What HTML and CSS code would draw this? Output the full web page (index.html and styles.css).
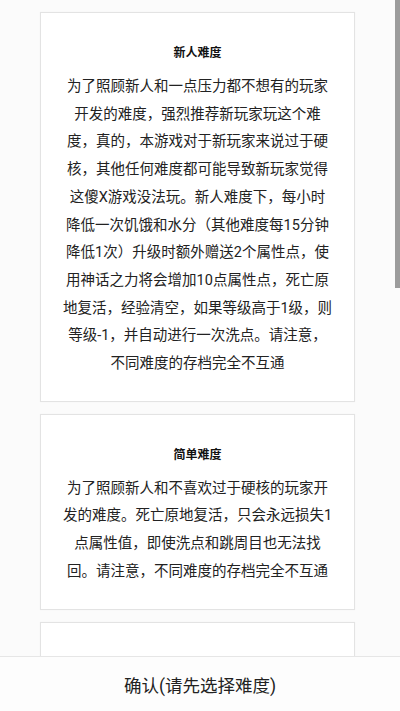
FILE: index.html
```html
<!DOCTYPE html>
<html lang="zh-CN">
<head>
<meta charset="utf-8">
<title>选择难度</title>
<link rel="stylesheet" href="styles.css">
</head>
<body>
<div class="app">
  <div class="list">
    <div class="cards">
      <div class="card">
        <div class="card-title">新人难度</div>
        <div class="card-text">为了照顾新人和一点压力都不想有的玩家开发的难度，强烈推荐新玩家玩这个难度，真的，本游戏对于新玩家来说过于硬核，其他任何难度都可能导致新玩家觉得这傻X游戏没法玩。新人难度下，每小时降低一次饥饿和水分（其他难度每15分钟降低1次）升级时额外赠送2个属性点，使用神话之力将会增加10点属性点，死亡原地复活，经验清空，如果等级高于1级，则等级-1，并自动进行一次洗点。请注意，不同难度的存档完全不互通</div>
      </div>
      <div class="card">
        <div class="card-title">简单难度</div>
        <div class="card-text">为了照顾新人和不喜欢过于硬核的玩家开发的难度。死亡原地复活，只会永远损失1点属性值，即使洗点和跳周目也无法找回。请注意，不同难度的存档完全不互通</div>
      </div>
      <div class="card card-empty"></div>
    </div>
    <div class="scroll-thumb"></div>
  </div>
  <div class="bottom-bar">确认(请先选择难度)</div>
</div>
</body>
</html>
```
FILE: styles.css
```css
html, body {
  margin: 0;
  padding: 0;
}
body {
  font-family: Roboto, "Noto Sans CJK SC", sans-serif;
  background: #fbfbfb;
  color: #222;
}
.app {
  height: 711px;
  display: flex;
  flex-direction: column;
}
.list {
  flex: 1;
  min-height: 0;
  overflow: hidden;
  position: relative;
}
.cards {
  width: 395px;
  padding-top: 12px;
  display: flex;
  flex-direction: column;
  align-items: center;
  gap: 12px;
}
.card {
  width: 313px;
  background: #fff;
  border: 1px solid #e3e3e3;
  box-shadow: 0 0 1px rgba(0,0,0,0.06);
  padding: 32px 0 23px;
  text-align: center;
}
.card-empty {
  height: 200px;
}
.card-title {
  font-size: 12px;
  line-height: 16px;
  font-weight: 700;
  color: #111;
}
.card-text {
  margin: 12px auto 0;
  width: 269.6px;
  font-size: 14.5px;
  line-height: 27.7px;
  color: #222;
}
.scroll-thumb {
  position: absolute;
  top: 0;
  right: 0;
  width: 5px;
  height: 288px;
  background: #9c9c9c;
}
.bottom-bar {
  height: 54px;
  border-top: 1px solid #e6e6e6;
  background: #fdfdfd;
  display: flex;
  align-items: center;
  justify-content: center;
  font-size: 17.5px;
  color: #222;
}
```
